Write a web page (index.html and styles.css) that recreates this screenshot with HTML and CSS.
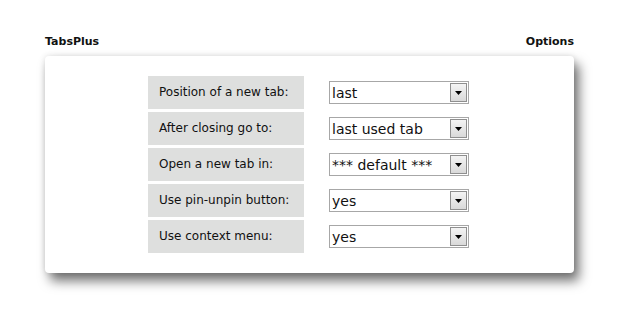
FILE: index.html
```html
<!DOCTYPE html>
<html>
<head>
<meta charset="utf-8">
<link rel="stylesheet" href="styles.css">
</head>
<body>
<div class="page">
  <div class="header">
    <span class="title">TabsPlus</span>
    <span class="title">Options</span>
  </div>
  <div class="card">
    <div class="grid">
      <div class="label">Position of a new tab:</div>
      <div class="cell"><div class="combo"><span class="value">last</span><span class="btn"><svg width="7" height="4" viewBox="0 0 7 4"><path d="M0 0H7L3.5 4Z" fill="#000"/></svg></span></div></div>
      <div class="label">After closing go to:</div>
      <div class="cell"><div class="combo"><span class="value">last used tab</span><span class="btn"><svg width="7" height="4" viewBox="0 0 7 4"><path d="M0 0H7L3.5 4Z" fill="#000"/></svg></span></div></div>
      <div class="label">Open a new tab in:</div>
      <div class="cell"><div class="combo"><span class="value">*** default ***</span><span class="btn"><svg width="7" height="4" viewBox="0 0 7 4"><path d="M0 0H7L3.5 4Z" fill="#000"/></svg></span></div></div>
      <div class="label">Use pin-unpin button:</div>
      <div class="cell"><div class="combo"><span class="value">yes</span><span class="btn"><svg width="7" height="4" viewBox="0 0 7 4"><path d="M0 0H7L3.5 4Z" fill="#000"/></svg></span></div></div>
      <div class="label">Use context menu:</div>
      <div class="cell"><div class="combo"><span class="value">yes</span><span class="btn"><svg width="7" height="4" viewBox="0 0 7 4"><path d="M0 0H7L3.5 4Z" fill="#000"/></svg></span></div></div>
    </div>
  </div>
</div>
</body>
</html>
```
FILE: styles.css
```css
html, body {
  margin: 0;
  padding: 0;
  background: #fff;
}
body {
  font-family: "DejaVu Sans", Verdana, sans-serif;
  color: #111;
  min-height: 320px;
}
.page {
  width: 529px;
  margin-left: 45px;
  padding-top: 35px;
  padding-bottom: 40px;
}
.header {
  display: flex;
  justify-content: space-between;
  height: 14px;
  line-height: 14px;
  margin-bottom: 7px;
}
.title {
  font-size: 11px;
  font-weight: bold;
  color: #111;
}
.card {
  background: #fff;
  border-radius: 4px;
  box-shadow: 5px 8px 12px rgba(0, 0, 0, 0.55), 0 0 6px rgba(0, 0, 0, 0.12);
  padding: 20px 0;
  display: flex;
  justify-content: center;
}
.grid {
  display: grid;
  grid-template-columns: 156px 140px;
  column-gap: 25px;
  row-gap: 3px;
  margin-left: -2px;
}
.label {
  background: #dedfde;
  height: 33px;
  line-height: 33px;
  padding-left: 11px;
  font-size: 12px;
  color: #111;
  white-space: nowrap;
}
.cell {
  display: flex;
  align-items: center;
}
.combo {
  box-sizing: border-box;
  width: 140px;
  height: 23px;
  border: 1px solid #a7a7a7;
  background: #fff;
  display: flex;
  align-items: stretch;
}
.value {
  flex: 1;
  font-size: 14px;
  line-height: 22px;
  padding-left: 2px;
  color: #111;
  white-space: nowrap;
  overflow: hidden;
}
.btn {
  box-sizing: border-box;
  width: 17px;
  margin: 1px;
  border: 1px solid #8f8f8f;
  background: linear-gradient(#f4f4f4, #d9d9d9);
  display: flex;
  align-items: center;
  justify-content: center;
}
```
